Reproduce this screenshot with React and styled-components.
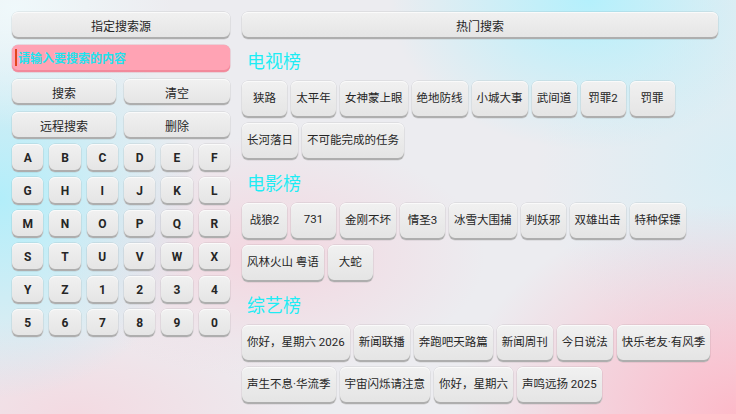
import React from "react"
import styled, { createGlobalStyle } from "styled-components"

const GlobalStyle = createGlobalStyle`
  html, body {
    margin: 0;
    padding: 0;
  }
  body {
    font-family: Roboto, "Noto Sans CJK SC", sans-serif;
  }
`

const Screen = styled.div`
  width: 736px;
  height: 414px;
  overflow: hidden;
  box-sizing: border-box;
  display: flex;
  gap: 12px;
  padding: 12px 18px 0 12px;
  background:
    radial-gradient(ellipse 160px 120px at 2% 2%, rgba(240, 250, 252, 0.9), rgba(240, 250, 252, 0) 100%),
    radial-gradient(ellipse 200px 200px at 0% 48%, rgba(178, 238, 250, 1), rgba(178, 238, 250, 0) 100%),
    radial-gradient(ellipse 200px 150px at 80% 0%, rgba(180, 240, 252, 1), rgba(180, 240, 252, 0) 100%),
    radial-gradient(ellipse 280px 210px at 100% 100%, rgba(252, 184, 200, 1), rgba(252, 184, 200, 0) 100%),
    radial-gradient(ellipse 220px 120px at 36% 62%, rgba(244, 212, 222, 0.9), rgba(244, 212, 222, 0) 100%),
    radial-gradient(ellipse 240px 100px at 10% 100%, rgba(244, 216, 224, 0.9), rgba(244, 216, 224, 0) 100%),
    radial-gradient(ellipse 200px 200px at 100% 40%, rgba(212, 238, 246, 0.8), rgba(212, 238, 246, 0) 100%),
    #ececf0;
`

const LeftPanel = styled.div`
  width: 218px;
  flex: none;
  display: flex;
  flex-direction: column;
`

const RightPanel = styled.div`
  width: 476px;
  flex: none;
  display: flex;
  flex-direction: column;
`

const Button = styled.button`
  box-sizing: border-box;
  height: ${(p) => p.$h || 27}px;
  margin: 0;
  padding: 0 4px;
  border: none;
  border-radius: 6px;
  background: linear-gradient(#f1f1f1, #e4e4e4);
  box-shadow:
    inset 0 1px 0 #fafafa,
    inset 0 -2px 0 #aeaeae,
    0 0 0 0.5px rgba(0, 0, 0, 0.12);
  color: #262626;
  font-family: Roboto, "Noto Sans CJK SC", sans-serif;
  font-size: 12px;
  font-weight: ${(p) => (p.$bold ? 700 : 400)};
  display: flex;
  align-items: center;
  justify-content: center;
  cursor: pointer;
`

const SearchInput = styled.div`
  box-sizing: border-box;
  height: 27px;
  margin-top: 6px;
  border-radius: 6px;
  background: #ffa3b4;
  box-shadow: inset 0 -2px 0 #f2899b, 0 0 0 0.5px rgba(220, 100, 120, 0.4);
  display: flex;
  align-items: center;
  padding: 0 0 2px 3px;
`

const Caret = styled.span`
  width: 2px;
  height: 17px;
  background: #e2461e;
  flex: none;
`

const Placeholder = styled.span`
  font-family: "Noto Sans CJK SC", sans-serif;
  font-size: 12px;
  font-weight: 700;
  color: #21e2ee;
  margin-left: 1px;
`

const ButtonPair = styled.div`
  display: grid;
  grid-template-columns: 104px 106px;
  column-gap: 8px;
  margin-top: ${(p) => p.$top}px;
`

const KeyGrid = styled.div`
  display: grid;
  grid-template-columns: repeat(6, 1fr);
  grid-auto-rows: 28px;
  column-gap: 6px;
  row-gap: 5px;
  margin-top: 5px;
`

const Heading = styled.h2`
  margin: ${(p) => p.$top}px 0 9px 5px;
  height: 24px;
  line-height: 24px;
  font-family: "Noto Sans CJK SC", sans-serif;
  font-size: 18px;
  font-weight: 400;
  color: #1eecf4;
`

const TagWrap = styled.div`
  display: flex;
  flex-wrap: wrap;
  gap: 5px 4px;
`

const Tag = styled(Button)`
  height: 37px;
  min-width: 45px;
  padding: 0 5px 6px;
  font-size: 11.5px;
  white-space: nowrap;
`

const keys = "ABCDEFGHIJKLMNOPQRSTUVWXYZ1234567890".split("")

const sections = [
  {
    title: "电视榜",
    top: 9,
    items: ["狭路", "太平年", "女神蒙上眼", "绝地防线", "小城大事", "武间道", "罚罪2", "罚罪", "长河落日", "不可能完成的任务"],
  },
  {
    title: "电影榜",
    top: 10,
    items: ["战狼2", "731", "金刚不坏", "情圣3", "冰雪大围捕", "判妖邪", "双雄出击", "特种保镖", "风林火山 粤语", "大蛇"],
  },
  {
    title: "综艺榜",
    top: 10,
    items: [
      "你好，星期六 2026",
      "新闻联播",
      "奔跑吧天路篇",
      "新闻周刊",
      "今日说法",
      "快乐老友·有风季",
      "声生不息·华流季",
      "宇宙闪烁请注意",
      "你好，星期六",
      "声鸣远扬 2025",
    ],
  },
]

const App = () => {
  return (
    <Screen>
      <GlobalStyle />
      <LeftPanel>
        <Button>指定搜索源</Button>
        <SearchInput>
          <Caret />
          <Placeholder>请输入要搜索的内容</Placeholder>
        </SearchInput>
        <ButtonPair $top={7}>
          <Button $h={26}>搜索</Button>
          <Button $h={26}>清空</Button>
        </ButtonPair>
        <ButtonPair $top={7}>
          <Button>远程搜索</Button>
          <Button>删除</Button>
        </ButtonPair>
        <KeyGrid>
          {keys.map((k) => (
            <Button key={k} $h={28} $bold>
              {k}
            </Button>
          ))}
        </KeyGrid>
      </LeftPanel>
      <RightPanel>
        <Button>热门搜索</Button>
        {sections.map((s) => (
          <React.Fragment key={s.title}>
            <Heading $top={s.top}>{s.title}</Heading>
            <TagWrap>
              {s.items.map((t) => (
                <Tag key={t}>{t}</Tag>
              ))}
            </TagWrap>
          </React.Fragment>
        ))}
      </RightPanel>
    </Screen>
  )
}

export default App
